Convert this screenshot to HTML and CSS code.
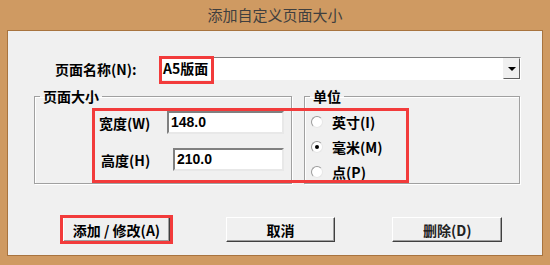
FILE: index.html
```html
<!DOCTYPE html>
<html lang="zh-CN">
<head>
    <meta charset="UTF-8">
    <meta name="viewport" content="width=device-width, initial-scale=1.0">
    <title>添加自定义页面大小</title>
    <link rel="stylesheet" href="styles.css">
</head>
<body>
    <div class="ventana">
        <div class="titulo">添加自定义页面大小</div>
        <div class="cliente">
            <div class="fila-nombre">
                <label class="etiqueta-nombre">页面名称(N):</label>
                <div class="combo">
                    <div class="combo-texto">A5版面</div>
                    <div class="combo-boton"><span class="flecha"></span></div>
                </div>
            </div>

            <div class="fila-grupos">
                <fieldset class="grupo grupo-tamano">
                    <legend>页面大小</legend>
                    <div class="campo campo-ancho">
                        <label>宽度(W)</label>
                        <div class="entrada">148.0</div>
                    </div>
                    <div class="campo campo-alto">
                        <label>高度(H)</label>
                        <div class="entrada">210.0</div>
                    </div>
                </fieldset>
                <fieldset class="grupo grupo-unidad">
                    <legend>单位</legend>
                    <div class="opcion"><span class="radio"></span>英寸(I)</div>
                    <div class="opcion"><span class="radio marcado"></span>毫米(M)</div>
                    <div class="opcion"><span class="radio"></span>点(P)</div>
                </fieldset>
            </div>

            <div class="fila-botones">
                <button class="boton boton-agregar">添加 / 修改(A)</button>
                <button class="boton boton-cancelar">取消</button>
                <button class="boton boton-borrar">删除(D)</button>
            </div>
        </div>

        <div class="marco-rojo rojo-nombre"></div>
        <div class="marco-rojo rojo-campos"></div>
        <div class="marco-rojo rojo-agregar"></div>
    </div>
</body>
</html>
```

FILE: styles.css
```css
body {
    margin: 0;
    font-family: "Noto Sans CJK SC", "Liberation Sans", sans-serif;
}
.ventana {
    position: relative;
    width: 550px;
    height: 265px;
    box-sizing: border-box;
    background-color: #cf9a62;
    padding: 0 7px 9px 7px;
}
.titulo {
    height: 30px;
    line-height: 30px;
    text-align: center;
    font-size: 15px;
    color: #3f3f3f;
}
.cliente {
    height: 226px;
    box-sizing: border-box;
    border: 1px solid #a8743f;
    background-color: #f0f0f0;
    padding-top: 26px;
}
.fila-nombre {
    display: flex;
    align-items: center;
    height: 23px;
}
.etiqueta-nombre {
    width: 105px;
    margin-left: 47px;
    font-size: 14px;
    font-weight: bold;
    color: #000;
}
.combo {
    display: flex;
    width: 361px;
    height: 23px;
    box-sizing: border-box;
    border: 1px solid;
    border-color: #808080 #fff #fff #808080;
    background-color: #fff;
}
.combo-texto {
    flex: 1;
    padding-left: 2px;
    font-size: 14px;
    font-weight: bold;
    line-height: 21px;
}
.combo-boton {
    width: 17px;
    box-sizing: border-box;
    border: 1px solid;
    border-color: #f0f0f0 #606060 #606060 #f0f0f0;
    background-color: #f0f0f0;
    display: flex;
    justify-content: center;
    align-items: center;
}
.flecha {
    width: 0;
    height: 0;
    border-left: 4px solid transparent;
    border-right: 4px solid transparent;
    border-top: 4px solid #000;
}
.fila-grupos {
    display: flex;
    gap: 12px;
    margin-top: 7px;
    margin-left: 26px;
}
.grupo {
    margin: 0;
    padding: 0;
    border: 1px solid #a0a0a0;
    box-shadow: inset 1px 1px 0 #fff, 1px 1px 0 #fff;
    box-sizing: border-box;
    height: 97px;
}
.grupo legend {
    margin-left: 5px;
    padding: 0 3px;
    font-size: 14px;
    font-weight: bold;
    line-height: 18px;
}
.grupo-tamano {
    width: 258px;
}
.grupo-unidad {
    width: 216px;
}
.campo {
    display: flex;
    align-items: center;
    font-size: 14px;
    font-weight: bold;
}
.campo-ancho {
    margin-top: 6px;
    margin-left: 64px;
}
.campo-ancho label {
    width: 68px;
}
.campo-ancho .entrada {
    width: 117px;
}
.campo-alto {
    margin-top: 14px;
    margin-left: 66px;
}
.campo-alto label {
    width: 72px;
}
.campo-alto .entrada {
    width: 111px;
}
.entrada {
    height: 23px;
    box-sizing: border-box;
    border: 2px solid;
    border-color: #808080 #e8e8e8 #e8e8e8 #808080;
    background-color: #fff;
    padding-left: 2px;
    line-height: 19px;
    font-family: "Liberation Sans", sans-serif;
    font-size: 14px;
}
.opcion {
    display: flex;
    align-items: center;
    height: 25px;
    margin-left: 6px;
    font-size: 14px;
    font-weight: bold;
}
.opcion:first-of-type {
    margin-top: 4px;
}
.radio {
    width: 12px;
    height: 12px;
    box-sizing: border-box;
    border-radius: 50%;
    border: 1px solid;
    border-color: #9a9a9a #e6e6e6 #e6e6e6 #9a9a9a;
    background-color: #fff;
    margin-right: 9px;
    display: flex;
    justify-content: center;
    align-items: center;
}
.radio.marcado::after {
    content: "";
    width: 4px;
    height: 4px;
    border-radius: 50%;
    background-color: #000;
}
.fila-botones {
    display: flex;
    margin-top: 33px;
}
.boton {
    height: 25px;
    box-sizing: border-box;
    border: 1px solid;
    border-color: #fff #404040 #404040 #fff;
    box-shadow: inset -1px -1px 0 #a0a0a0;
    background-color: #f0f0f0;
    font-family: "Noto Sans CJK SC", "Liberation Sans", sans-serif;
    font-size: 14px;
    font-weight: bold;
    color: #000;
    padding: 0;
}
.boton-agregar {
    width: 107px;
    margin-left: 55px;
}
.boton-cancelar {
    width: 109px;
    margin-left: 56px;
}
.boton-borrar {
    width: 110px;
    margin-left: 57px;
    padding-left: 30px;
    text-align: left;
    color: #222;
}
.marco-rojo {
    position: absolute;
    border: 3px solid #f23b3b;
    box-sizing: border-box;
}
.rojo-nombre {
    left: 159px;
    top: 56px;
    width: 55px;
    height: 28px;
}
.rojo-campos {
    left: 92px;
    top: 108px;
    width: 317px;
    height: 75px;
}
.rojo-agregar {
    left: 60px;
    top: 215px;
    width: 113px;
    height: 29px;
}
```
